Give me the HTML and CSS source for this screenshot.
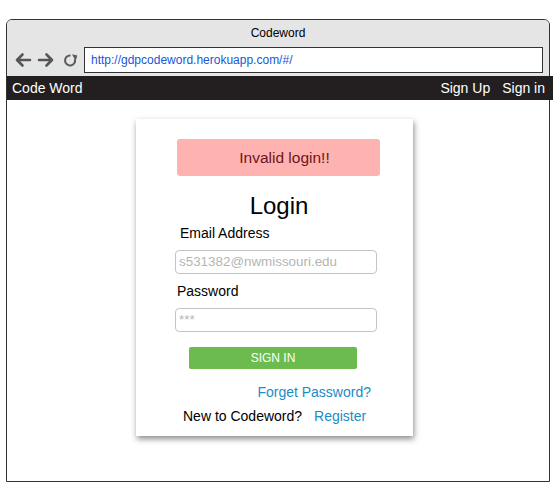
FILE: index.html
```html
<!DOCTYPE html>
<html>
<head>
<meta charset="utf-8">
<link rel="stylesheet" href="styles.css">
</head>
<body>
<div class="frame">
  <div class="chrome">
    <div class="title">Codeword</div>
    <div class="toolbar">
      <svg class="ico" width="18" height="16" viewBox="0 0 18 16"><path d="M16 8H3M8.5 2.5L3 8l5.5 5.5" fill="none" stroke="#555" stroke-width="2.6" stroke-linecap="round" stroke-linejoin="round"/></svg>
      <svg class="ico" width="18" height="16" viewBox="0 0 18 16"><path d="M2 8h13M9.5 2.5L15 8l-5.5 5.5" fill="none" stroke="#555" stroke-width="2.6" stroke-linecap="round" stroke-linejoin="round"/></svg>
      <svg class="ico reload" width="15" height="15" viewBox="0 0 15 15"><path d="M11.9 6.2A5 5 0 1 1 7.5 2.5" fill="none" stroke="#5a5a5a" stroke-width="2"/><path d="M9 1.2L14.4 2.6 12.6 8z" fill="#5a5a5a"/></svg>
      <div class="url">http://gdpcodeword.herokuapp.com/#/</div>
    </div>
  </div>
  <div class="navbar">
    <span class="brand">Code Word</span>
    <span class="navlinks"><span>Sign Up</span><span>Sign in</span></span>
  </div>
  <div class="content">
    <div class="card">
      <div class="alert">Invalid login!!</div>
      <h2 class="heading">Login</h2>
      <label class="label email-label">Email Address</label>
      <div class="input">s531382@nwmissouri.edu</div>
      <label class="label pass-label">Password</label>
      <div class="input">***</div>
      <div class="btn">SIGN IN</div>
      <div class="forgot"><span class="link">Forget Password?</span></div>
      <div class="register">New to Codeword?<span class="link reg">Register</span></div>
    </div>
  </div>
</div>
</body>
</html>
```
FILE: styles.css
```css
html, body { margin: 0; padding: 0; background: #fff; }
body { font-family: "Liberation Sans", Arial, sans-serif; color: #000; }
.frame {
  margin: 19px 0 0 6px;
  width: 542px;
  height: 461px;
  border: 1px solid #333;
  border-radius: 6px 6px 0 0;
}
.chrome {
  background: #e5e5e5;
  height: 56px;
  border-radius: 5px 5px 0 0;
  box-sizing: border-box;
  padding-top: 6px;
}
.title { text-align: center; font-size: 12px; line-height: 14px; height: 21px; }
.toolbar { display: flex; align-items: center; padding-left: 7px; }
.ico { display: block; margin-right: 5px; }
.reload { margin-left: 3px; margin-right: 6px; }
.url {
  width: 459px; height: 26px; box-sizing: border-box;
  border: 1px solid #333; background: #fff;
  color: #1a56d6; font-size: 12px; line-height: 24px; padding-left: 6px;
}
.navbar {
  background: #231f20; color: #fff; height: 24px;
  margin-right: -4px;
  display: flex; justify-content: space-between; align-items: center;
  font-size: 14px; padding: 0 8px 0 5px;
}
.navlinks span { margin-left: 12px; }
.content { padding-top: 19px; }
.card {
  margin-left: 129px; width: 277px; box-sizing: border-box;
  padding: 20px 0 12px 0;
  background: #fff;
  box-shadow: 1px 3px 6px rgba(0,0,0,0.45);
  display: flex; flex-direction: column;
}
.alert {
  margin-left: 41px; width: 203px; height: 37px; box-sizing: border-box;
  padding-left: 12px;
  background: #ffb3b0; border-radius: 3px;
  color: #6d1420; font-size: 15.5px; line-height: 37px; text-align: center;
}
.heading {
  margin: 16px 0 0 0; padding-left: 9px; font-weight: normal; font-size: 24px; line-height: 28px; text-align: center;
}
.label { font-size: 14px; line-height: 16px; }
.email-label { margin: 5px 0 0 44px; }
.pass-label { margin: 9px 0 0 41px; }
.input {
  margin: 9px 0 0 39px; width: 202px; height: 24px; box-sizing: border-box;
  border: 1px solid #c4c4c4; border-radius: 4px;
  color: #b5b5b5; font-size: 13.4px; line-height: 22px; padding-left: 3px;
}
.btn {
  margin: 15px 0 0 53px; width: 168px; height: 22px;
  background: #6bbb4f; border-radius: 2px;
  color: #fff; font-size: 12px; line-height: 22px; text-align: center;
}
.forgot { margin: 15px 0 0 0; padding-right: 42px; text-align: right; font-size: 14px; line-height: 16px; }
.register { margin: 8px 0 0 47px; font-size: 14px; line-height: 16px; }
.link { color: #1b8cc4; }
.reg { margin-left: 12px; }
```
